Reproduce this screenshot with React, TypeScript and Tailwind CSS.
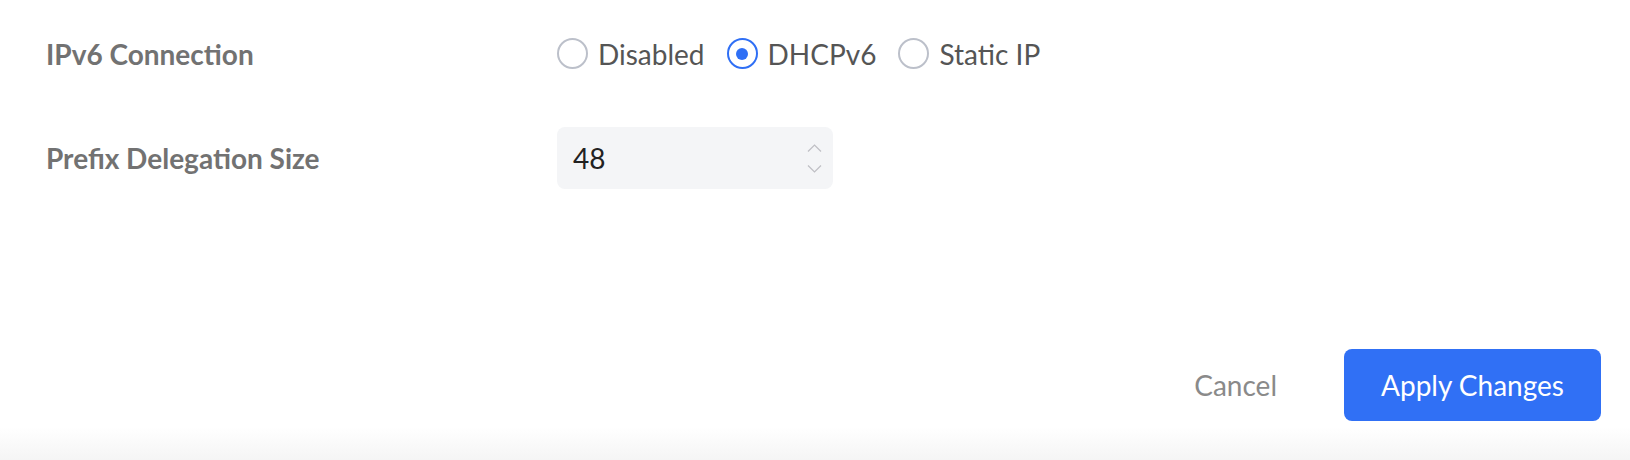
import React, { useState } from 'react';

const options = ['Disabled', 'DHCPv6', 'Static IP'];

const Radio = ({ label, checked, onClick }: { label: string; checked: boolean; onClick: () => void }) => (
  <button onClick={onClick} className="flex items-center gap-[10px]">
    <span
      className={
        checked
          ? 'flex h-[31px] w-[31px] items-center justify-center rounded-full border-2 border-[#2f6ff5]'
          : 'flex h-[31px] w-[31px] items-center justify-center rounded-full border-2 border-[#bcc0ca]'
      }
    >
      {checked && <span className="h-[12px] w-[12px] rounded-full bg-[#2f6ff5]" />}
    </span>
    <span className="text-[28px] leading-none text-[#555555]">{label}</span>
  </button>
);

const App = () => {
  const [mode, setMode] = useState('DHCPv6');
  const [size, setSize] = useState(48);

  return (
    <div className="flex h-[460px] w-full flex-col bg-white font-['Lato',sans-serif]">
      <div className="pl-[46px] pt-[38px]">
        <div className="flex h-[31px] items-center">
          <div className="w-[511px] text-[28px] font-bold text-[#727272]">IPv6 Connection</div>
          <div className="flex items-center gap-[22px]">
            {options.map((o) => (
              <Radio key={o} label={o} checked={mode === o} onClick={() => setMode(o)} />
            ))}
          </div>
        </div>

        <div className="mt-[58px] flex items-center">
          <div className="w-[511px] text-[28px] font-bold text-[#727272]">Prefix Delegation Size</div>
          <div className="flex h-[62px] w-[276px] items-center justify-between rounded-[8px] bg-[#f4f5f7] pl-[16px] pr-[11px]">
            <span className="text-[28px] text-[#222222]">{size}</span>
            <div className="flex flex-col gap-[13px]">
              <svg onClick={() => setSize(size + 1)} width="15" height="8" viewBox="0 0 15 8" fill="none" stroke="#bfbfc4" strokeWidth="1.2">
                <path d="M1 7.5L7.5 1L14 7.5" />
              </svg>
              <svg onClick={() => setSize(size - 1)} width="15" height="8" viewBox="0 0 15 8" fill="none" stroke="#bfbfc4" strokeWidth="1.2">
                <path d="M1 0.5L7.5 7L14 0.5" />
              </svg>
            </div>
          </div>
        </div>
      </div>

      <div className="mt-[160px] flex items-center justify-end pr-[29px]">
        <button className="mr-[67px] text-[28px] text-[#8a8a8a]">Cancel</button>
        <button className="h-[72px] w-[257px] rounded-[8px] bg-[#3070f5] text-[28px] text-white">Apply Changes</button>
      </div>

      <div className="mt-auto h-[33px] bg-gradient-to-b from-white to-[#f5f5f5]" />
    </div>
  );
};

export default App;
